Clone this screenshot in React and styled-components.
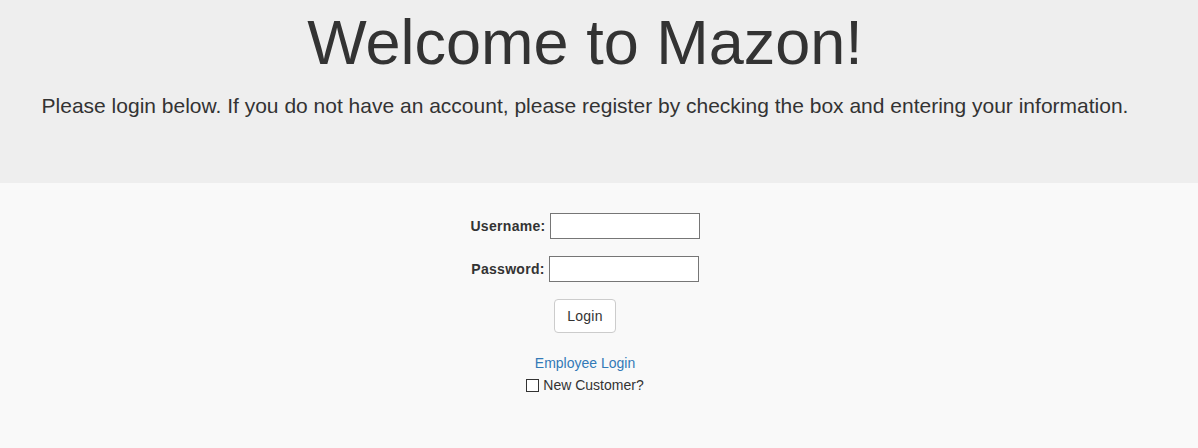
import React from "react";
import styled, { createGlobalStyle } from "styled-components";

const Global = createGlobalStyle`
  html, body { margin: 0; padding: 0; }
  body {
    background: #f9f9f9;
    font-family: "Liberation Sans", Arial, sans-serif;
    font-size: 14px;
    line-height: 20px;
    color: #333;
  }
`;

const Jumbotron = styled.header`
  background: #eeeeee;
  padding: 8px 0 62px;
`;

const Container = styled.div`
  width: 1170px;
  text-align: center;
`;

const Title = styled.h1`
  margin: 0;
  font-size: 63px;
  line-height: 69px;
  font-weight: 400;
  color: #333;
`;

const Lead = styled.p`
  margin: 14px 0 0;
  font-size: 21px;
  line-height: 30px;
  font-weight: 400;
`;

const Form = styled.form`
  width: 1170px;
  display: flex;
  flex-direction: column;
  align-items: center;
  padding-top: 30px;
`;

const Row = styled.div`
  display: flex;
  align-items: center;
  height: 26px;
  margin-bottom: ${(p) => p.$gap || 0}px;
`;

const Label = styled.label`
  font-weight: 700;
  letter-spacing: 0.3px;
  margin-right: 4px;
`;

const Input = styled.input`
  box-sizing: border-box;
  width: 150px;
  height: 26px;
  border: 1px solid #767676;
  background: #fff;
  padding: 1px 2px;
  font: inherit;
`;

const Button = styled.button`
  box-sizing: border-box;
  height: 34px;
  padding: 6px 12px;
  font: inherit;
  font-size: 14px;
  letter-spacing: 0.2px;
  color: #333;
  background: #fff;
  border: 1px solid #ccc;
  border-radius: 4px;
  margin-bottom: 20px;
`;

const Link = styled.a`
  color: #337ab7;
  text-decoration: none;
  line-height: 20px;
`;

const CheckRow = styled.div`
  display: flex;
  align-items: center;
  margin-top: 2px;
  line-height: 20px;
`;

const Check = styled.input`
  appearance: none;
  box-sizing: border-box;
  width: 13px;
  height: 13px;
  margin: 0 4px 0 0;
  border: 1px solid #333;
  background: #fff;
`;

export default function App() {
  return (
    <>
      <Global />
      <Jumbotron>
        <Container>
          <Title>Welcome to Mazon!</Title>
          <Lead>
            Please login below. If you do not have an account, please register by
            checking the box and entering your information.
          </Lead>
        </Container>
      </Jumbotron>
      <Form onSubmit={(e) => e.preventDefault()}>
        <Row $gap={17}>
          <Label>Username:</Label>
          <Input type="text" />
        </Row>
        <Row $gap={17}>
          <Label>Password:</Label>
          <Input type="password" />
        </Row>
        <Button type="submit">Login</Button>
        <Link href="#">Employee Login</Link>
        <CheckRow>
          <Check type="checkbox" />
          <span>New Customer?</span>
        </CheckRow>
      </Form>
    </>
  );
}
